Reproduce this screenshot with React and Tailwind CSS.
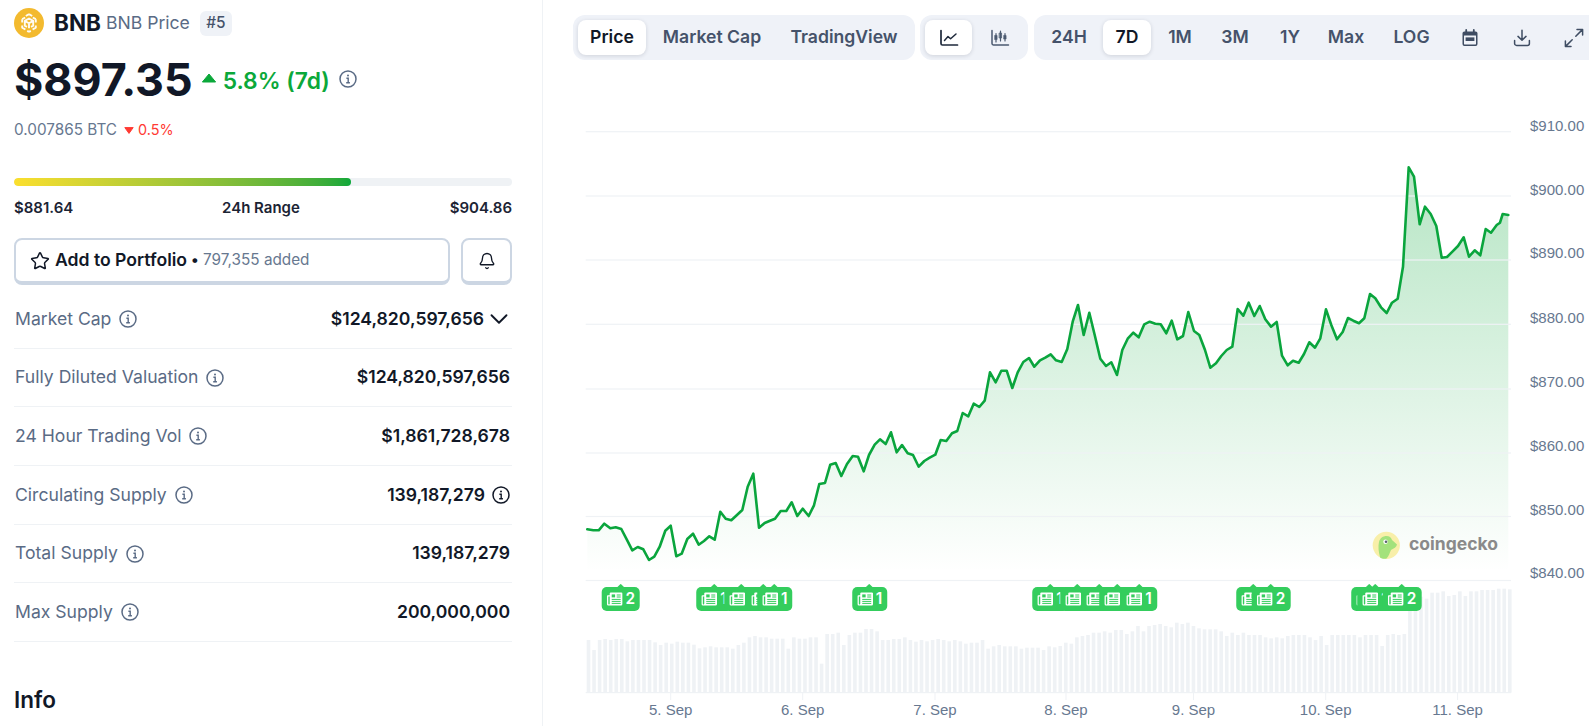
import React from "react";
import { Star, Bell, ChevronDown } from "lucide-react";

const z5 = [[52,748],[70,751],[86,751],[103,731],[121,745],[137,742],[154,747],[170,778],[187,811],[203,801],[220,808],[237,840],[253,830],[269,800],[286,752],[302,737],[319,829],[335,821],[352,777],[369,761],[386,794],[402,783],[418,769],[434,779],[451,695],[467,716],[484,721],[500,706],[517,690],[533,620],[550,581],[567,743],[584,729],[600,722],[615,716],[632,693],[649,693],[665,667],[682,708],[698,686],[716,708],[732,676],[748,612],[765,609],[781,554],[797,549],[814,588],[831,552],[848,528],[864,530],[881,574],[897,525],[914,494],[930,478],[947,492],[963,457],[980,517],[996,495],[1013,520],[1029,525],[1046,560],[1063,543],[1079,533],[1096,524],[1112,480],[1129,483],[1146,460],[1162,453],[1178,399],[1195,409],[1211,371],[1228,381],[1244,362],[1260,277],[1277,307],[1294,272],[1310,272],[1327,324],[1343,277],[1360,246],[1377,234],[1393,260],[1410,241],[1426,233],[1442,223],[1458,241],[1475,246]];
const z6 = [[52,597],[68,515],[84,465],[101,555],[118,488],[134,555],[151,626],[168,648],[184,637],[201,675],[217,600],[233,566],[250,548],[266,562],[283,523],[299,515],[316,521],[332,523],[349,550],[365,512],[382,568],[399,558],[415,486],[432,543],[448,555],[465,600],[481,653],[498,640],[514,618],[530,600],[547,590],[563,477],[580,497],[596,458],[613,498],[629,468],[646,508],[663,530],[680,516],[696,617],[713,646],[729,632],[746,638],[762,612],[778,577],[795,593],[811,565],[828,478],[844,525],[861,568],[878,546],[894,504],[910,512],[927,520],[943,505],[960,432],[976,445],[993,472],[1010,489],[1026,458],[1043,446],[1059,350],[1076,52],[1092,80],[1109,223],[1125,170],[1142,192],[1159,228],[1175,323],[1191,321],[1208,304],[1224,288],[1241,262],[1257,320],[1274,301],[1291,316],[1307,237],[1323,248],[1340,225],[1350,218],[1358,192],[1375,195]];
const pts = [
  ...z5.map(([x, y]) => [570 + x / 3, 280 + y / 3]),
  ...z6.map(([x, y]) => [1050 + x / 3, 150 + y / 3]),
];
const linePath = pts.map((p, i) => `${i ? "L" : "M"}${p[0].toFixed(1)} ${p[1].toFixed(1)}`).join(" ");
const areaPath = `${linePath} L${pts[pts.length - 1][0].toFixed(1)} 580.5 L${pts[0][0].toFixed(1)} 580.5 Z`;

const barsA = [450,480,450,447,450,447,447,454,450,450,450,450,457,465,458,461,455,458,458,464,475,472,469,472,472,472,476,465,458,442,438,442,442,446,446,446,476,442,446,446,442,442,521,432,432,428,465,435,428,428,417,417,424,450,450,447,447,442,450,455,450,454,450,447,450,454,450,454,461,458,458,450,476,469,465,469,469,469,476,473,473,473,480];
const barsB = [469,472,468,458,461,442,438,435,428,428,424,428,420,420,432,424,408,424,408,405,402,408,412,398,402,398,408,415,418,418,418,424,438,428,435,428,435,435,435,442,445,442,445,438,435,435,435,442,450,438,465,435,435,435,435,435,442,435,435,435,468,435,432,435,432,360,330,320,326,308,308,304,318,315,304,318,304,304,300,300,300,296,296,298];
const bars = [...barsA, ...barsB].map((t, i) => ({ x: 586.7 + i * 5.55, y: 490 + t / 3 }));

const gridY = [131.7, 196, 260, 324.3, 389, 453, 516.5, 580.5];
const yLabels = [["$910.00",125.5],["$900.00",189.5],["$890.00",253.3],["$880.00",317.5],["$870.00",382],["$860.00",445.5],["$850.00",510],["$840.00",573]];
const xLabels = [["5. Sep",670.7],["6. Sep",802.7],["7. Sep",935],["8. Sep",1066],["9. Sep",1193.5],["10. Sep",1325.7],["11. Sep",1457.6]];
const news = [[620.7,"2"],[714,"1"],[741.7,"1"],[763.7,"1"],[774.7,"1"],[869.5,"1"],[1050,"1"],[1077.6,"1"],[1099.4,"1"],[1117,"1"],[1139,"1"],[1253.7,"1"],[1271,"2"],[1369,"1"],[1375,"1"],[1402,"2"]];

function InfoIcon({ className = "text-[#5a6b85]" }) {
  return (
    <svg width="18" height="18" viewBox="0 0 18 18" fill="none" stroke="currentColor" className={className}>
      <circle cx="9" cy="9" r="8" strokeWidth="1.5" />
      <circle cx="9" cy="5.6" r="1" fill="currentColor" stroke="none" />
      <path d="M7.4 8.3H9.2V12.7M7.2 12.8H10.9" strokeWidth="1.4" />
    </svg>
  );
}

function NewsIcon() {
  return (
    <svg width="16" height="14" viewBox="0 0 16 14" className="shrink-0">
      <path d="M3 1.6A1.2 1.2 0 0 1 4.2.4h10.4a1.2 1.2 0 0 1 1.2 1.2v10.4a1.6 1.6 0 0 1-1.6 1.6H1.8A1.6 1.6 0 0 1 .2 12V4.2A1 1 0 0 1 1.2 3.2H3Z" fill="#fff" />
      <path d="M1.6 4.6V11.8a.6.6 0 0 0 1.4 0V4.6Z" fill="#34cd5d" />
      <rect x="5" y="2.4" width="3.4" height="3" fill="#34cd5d" />
      <path d="M10 3h4M10 5h4M5 7.4h9M5 9.4h9M5 11.4h9" stroke="#34cd5d" strokeWidth="1" />
    </svg>
  );
}

function BnbLogo() {
  return (
    <svg width="30" height="30" viewBox="0 0 30 30" className="shrink-0">
      <circle cx="15" cy="15" r="15" fill="#F3BA2F" />
      <g fill="none" stroke="#fff" strokeWidth="1.9" strokeLinejoin="round" opacity="0.95">
        <path d="M15 6.2l3.2 1.8M15 6.2L11.8 8M8.2 11.2l3-1.7M21.8 11.2l-3-1.7M8.2 11.2v3.4M21.8 11.2v3.4M8.2 17.6v2l3.2 1.9M21.8 17.6v2l-3.2 1.9M15 23.8l-1.8-1M15 23.8l1.8-1" />
        <path d="M15 10.5l4.2 2.4-4.2 2.4-4.2-2.4ZM15 15.3v5M10.8 13v4.6l2.2 1.3M19.2 13v4.6L17 18.9" />
      </g>
    </svg>
  );
}

function LineIcon() {
  return (
    <svg width="20" height="20" viewBox="0 0 20 20" fill="none" stroke="#1e293b" strokeWidth="1.7" strokeLinecap="round" strokeLinejoin="round">
      <path d="M2 2.5V15.6a1.4 1.4 0 0 0 1.4 1.4H18.5" />
      <path d="M5.5 12.5L9 8.6l2.6 2.2L17 6" strokeWidth="1.5" />
    </svg>
  );
}

function CandleIcon() {
  return (
    <svg width="20" height="20" viewBox="0 0 20 20" fill="none" stroke="#4b5a70" strokeWidth="1.5" strokeLinecap="round" strokeLinejoin="round">
      <path d="M2 2.5V15.6a1.4 1.4 0 0 0 1.4 1.4H18.5" />
      <path d="M6 5.5V14M10.5 3V13M15 5.5V13" strokeWidth="1.2" />
      <rect x="4.9" y="7.5" width="2.2" height="4" fill="#4b5a70" strokeWidth="0.6" />
      <rect x="9.4" y="5" width="2.2" height="5" fill="#4b5a70" strokeWidth="0.6" />
      <rect x="13.9" y="7.5" width="2.2" height="3.5" fill="#4b5a70" strokeWidth="0.6" />
    </svg>
  );
}

function CalendarIcon() {
  return (
    <svg width="18" height="18" viewBox="0 0 18 18">
      <path d="M5.2 1v2.2M12.8 1v2.2" stroke="#3f4d63" strokeWidth="1.8" strokeLinecap="round" />
      <path d="M3.4 2.4h11.2A1.9 1.9 0 0 1 16.5 4.3v10.8a1.9 1.9 0 0 1-1.9 1.9H3.4a1.9 1.9 0 0 1-1.9-1.9V4.3A1.9 1.9 0 0 1 3.4 2.4Z" fill="#3f4d63" />
      <rect x="3" y="6.4" width="12" height="9" rx=".4" fill="#f0f3f9" />
      <rect x="4.6" y="8.4" width="8.8" height="3.6" fill="#3f4d63" />
    </svg>
  );
}

function DownloadIcon() {
  return (
    <svg width="18" height="18" viewBox="0 0 18 18" fill="none" stroke="#3f4d63" strokeWidth="1.5" strokeLinecap="round" strokeLinejoin="round">
      <path d="M9 1.2V11M5 7.4L9 11.2l4-3.8" />
      <path d="M1.6 11.4v3a2 2 0 0 0 2 2h10.8a2 2 0 0 0 2-2v-3" />
    </svg>
  );
}

function ExpandIcon() {
  return (
    <svg width="20" height="20" viewBox="0 0 20 20" fill="none" stroke="#3f4d63" strokeWidth="1.5" strokeLinecap="round" strokeLinejoin="round">
      <path d="M11.8 8.2L18.4 1.6M13 1.4h5.6V7" />
      <path d="M8.2 11.8L1.6 18.4M1.4 13v5.6H7" />
    </svg>
  );
}

function Seg({ active, children, className = "" }) {
  return (
    <div className={`flex h-[35px] shrink-0 items-center justify-center rounded-lg text-[17.6px] font-semibold whitespace-nowrap ${active ? "bg-white text-[#111827] shadow-[0_1px_4px_rgba(15,23,42,0.14)]" : "text-[#45526a]"} ${className}`}>
      {children}
    </div>
  );
}

const rows = [
  ["Market Cap", "$124,820,597,656", "chev"],
  ["Fully Diluted Valuation", "$124,820,597,656"],
  ["24 Hour Trading Vol", "$1,861,728,678"],
  ["Circulating Supply", "139,187,279", "info"],
  ["Total Supply", "139,187,279"],
  ["Max Supply", "200,000,000"],
];

export default function App() {
  return (
    <div className="flex h-[726px] w-[1589px] overflow-hidden bg-white text-[#111827] [font-family:Inter,sans-serif]">
      <aside className="w-[543px] shrink-0 border-r border-[#eff2f5] pl-[14px] pr-[30px] pt-2">
        <div className="flex h-[30px] items-center">
          <BnbLogo />
          <span className="ml-[10px] text-[22.5px] font-bold leading-none">BNB</span>
          <span className="ml-[5px] text-[17.6px] font-normal leading-none text-[#5a6b85]">BNB Price</span>
          <span className="ml-[10px] flex h-[25px] w-[32px] items-center justify-center rounded-md bg-[#eff2f7] text-[15.4px] font-medium text-[#45526a]">#5</span>
        </div>

        <div className="mt-[14px] flex h-[56px] items-center">
          <span className="text-[44.8px] font-bold leading-none">$897.35</span>
          <svg width="16" height="10" viewBox="0 0 16 10" className="ml-[8px] -mt-[4px]"><path d="M8 1l6.6 8H1.4Z" fill="#0ba83a" stroke="#0ba83a" strokeLinejoin="round" /></svg>
          <span className="ml-[6px] mt-[3px] text-[22.8px] font-semibold leading-none text-[#0ba83a]">5.8% (7d)</span>
          <span className="ml-[9px] -mt-[2px]"><InfoIcon /></span>
        </div>

        <div className="mt-[12px] flex h-[20px] items-center text-[15.3px]">
          <span className="text-[#677890]">0.007865 BTC</span>
          <svg width="10" height="7" viewBox="0 0 10 7" className="ml-[7px]"><path d="M5 6.4L.8.6h8.4Z" fill="#ff3a33" stroke="#ff3a33" strokeLinejoin="round" /></svg>
          <span className="ml-[4px] text-[14.4px] text-[#ff3a33]">0.5%</span>
        </div>

        <div className="mt-[38px] h-2 w-full overflow-hidden rounded-full bg-[#eff2f5]">
          <div className="h-full w-[337px] rounded-full bg-gradient-to-r from-[#fbdf2e] to-[#0ba83a]" />
        </div>
        <div className="mt-[12px] flex h-[20px] items-center justify-between text-[15px] font-semibold text-[#1c2434]">
          <span>$881.64</span>
          <span className="-ml-[1px]">24h Range</span>
          <span>$904.86</span>
        </div>

        <div className="mt-[20px] flex h-[47px] gap-[11px]">
          <div className="flex flex-1 items-center rounded-lg border-2 border-b-[4px] border-[#ccd6e3] pl-[14px]">
            <Star size={20} strokeWidth={1.8} className="text-[#111827]" />
            <span className="ml-[5px] text-[17.6px] font-semibold">Add to Portfolio</span>
            <span className="ml-[4px] text-[15.3px] text-[#677890]"><span className="font-semibold text-[#111827]">•</span> 797,355 added</span>
          </div>
          <div className="flex w-[51px] items-center justify-center rounded-lg border-2 border-b-[4px] border-[#ccd6e3]">
            <Bell size={18} strokeWidth={1.8} className="text-[#111827]" />
          </div>
        </div>

        <div className="mt-[5px]">
          {rows.map(([label, value, extra]) => (
            <div key={label} className="flex h-[58.7px] items-center justify-between border-b border-[#eff2f5] pl-[1px] pr-[2px]">
              <div className="flex items-center gap-[8px]">
                <span className="text-[17.6px] font-normal text-[#5a6b85]">{label}</span>
                <InfoIcon />
              </div>
              <div className="flex items-center gap-[4px]">
                <span className="text-[17.6px] font-semibold text-[#111827]">{value}</span>
                {extra === "chev" && <ChevronDown size={30} strokeWidth={1.5} className="-mx-[4px] text-[#111827]" />}
                {extra === "info" && <InfoIcon className="ml-[3px] text-[#111827]" />}
              </div>
            </div>
          ))}
        </div>

        <h2 className="mt-[43px] text-[22.5px] font-semibold leading-[30px]">Info</h2>
      </aside>

      <main className="min-w-0 flex-1">
        <div className="flex h-[70px] items-start gap-[5px] pl-[30px] pt-[15px]">
          <div className="flex h-[45px] shrink-0 items-center gap-[4px] rounded-xl bg-[#eff2f8] px-[5px]">
            <Seg active className="w-[68px]">Price</Seg>
            <Seg className="w-[124px]">Market Cap</Seg>
            <Seg className="w-[132px]">TradingView</Seg>
          </div>
          <div className="flex h-[45px] shrink-0 items-center gap-[4px] rounded-xl bg-[#eff2f8] px-[5px]">
            <Seg active className="w-[47px]"><LineIcon /></Seg>
            <Seg className="w-[47px]"><CandleIcon /></Seg>
          </div>
          <div className="ml-[1px] flex h-[45px] shrink-0 items-center gap-[4px] rounded-xl bg-[#eff2f8] pl-[5px] pr-[20px]">
            <Seg className="w-[60px]">24H</Seg>
            <Seg active className="w-[48px]">7D</Seg>
            <Seg className="w-[50px]">1M</Seg>
            <Seg className="w-[52px]">3M</Seg>
            <Seg className="w-[50px]">1Y</Seg>
            <Seg className="w-[54px]">Max</Seg>
            <Seg className="w-[69px]">LOG</Seg>
            <Seg className="w-[40px]"><CalendarIcon /></Seg>
            <Seg className="w-[56px]"><DownloadIcon /></Seg>
            <Seg className="w-[40px]"><ExpandIcon /></Seg>
          </div>
        </div>

        <div className="relative h-[656px] w-[1046px]">
          <svg viewBox="543 70 1046 656" width="1046" height="656" className="block">
            <defs>
              <linearGradient id="area" gradientUnits="userSpaceOnUse" x1="0" y1="165" x2="0" y2="572">
                <stop offset="0" stopColor="#0ba83a" stopOpacity="0.3" />
                <stop offset="1" stopColor="#0ba83a" stopOpacity="0" />
              </linearGradient>
            </defs>
            {bars.map((b, i) => (
              <rect key={i} x={b.x} y={b.y} width="3.6" height={692.7 - b.y} fill="#eff2f5" />
            ))}
            <rect x="585.7" y="692" width="925.3" height="1.2" fill="#eff2f5" />
            {xLabels.map(([l, x]) => (
              <rect key={l} x={x - 0.5} y="692" width="1" height="8" fill="#eff2f5" />
            ))}
            <path d={areaPath} fill="url(#area)" />
            {gridY.map((y) => (
              <rect key={y} x="585.7" y={y - 0.6} width="925.3" height="1.2" fill="#eff2f5" />
            ))}
            <path d={linePath} fill="none" stroke="#0aa53d" strokeWidth="2.6" strokeLinejoin="round" strokeLinecap="round" />
            <g className="[font-family:'Liberation_Sans',Arial,sans-serif] text-[15px]" fill="#677890">
              {yLabels.map(([l, y]) => (
                <text key={l} x="1530" y={y + 5}>{l}</text>
              ))}
              {xLabels.map(([l, x]) => (
                <text key={l} x={x} y="715" textAnchor="middle">{l}</text>
              ))}
            </g>
            <g>
              <circle cx="1386.3" cy="545.3" r="13.6" fill="#f8efa9" />
              <path d="M1380 557c-1.5-5-2-11-1-15c1-4 4-6 7.5-6c3 0 4.5 1.5 5.5 4l5 4.5c-.5 2.5-3 4-6 5.500c-1.500 3-2 6-4.500 8.500c-2 .5-4.500 .5-6.500-1Z" fill="#a3e27c" />
              <circle cx="1385.5" cy="541.7" r="2.2" fill="#fff" />
              <circle cx="1386" cy="541.7" r="1.3" fill="#5a6470" />
              <text x="1409" y="550" className="[font-family:Inter,sans-serif] text-[17.5px] font-bold" fill="#8a8a8a">coingecko</text>
            </g>
          </svg>

          {news.map(([x, n], i) => (
            <div
              key={i}
              className="absolute top-[517px] flex h-[24px] -translate-x-1/2 items-center gap-[3px] rounded-[5px] bg-[#34cd5d] px-[5px] text-[15.4px] font-semibold leading-none text-white before:absolute before:left-1/2 before:-top-[2.5px] before:h-[6px] before:w-[6px] before:-translate-x-1/2 before:rotate-45 before:rounded-[1px] before:bg-[#34cd5d]"
              style={{ left: x - 543 }}
            >
              <NewsIcon />
              <span>{n}</span>
            </div>
          ))}
        </div>
      </main>
    </div>
  );
}
